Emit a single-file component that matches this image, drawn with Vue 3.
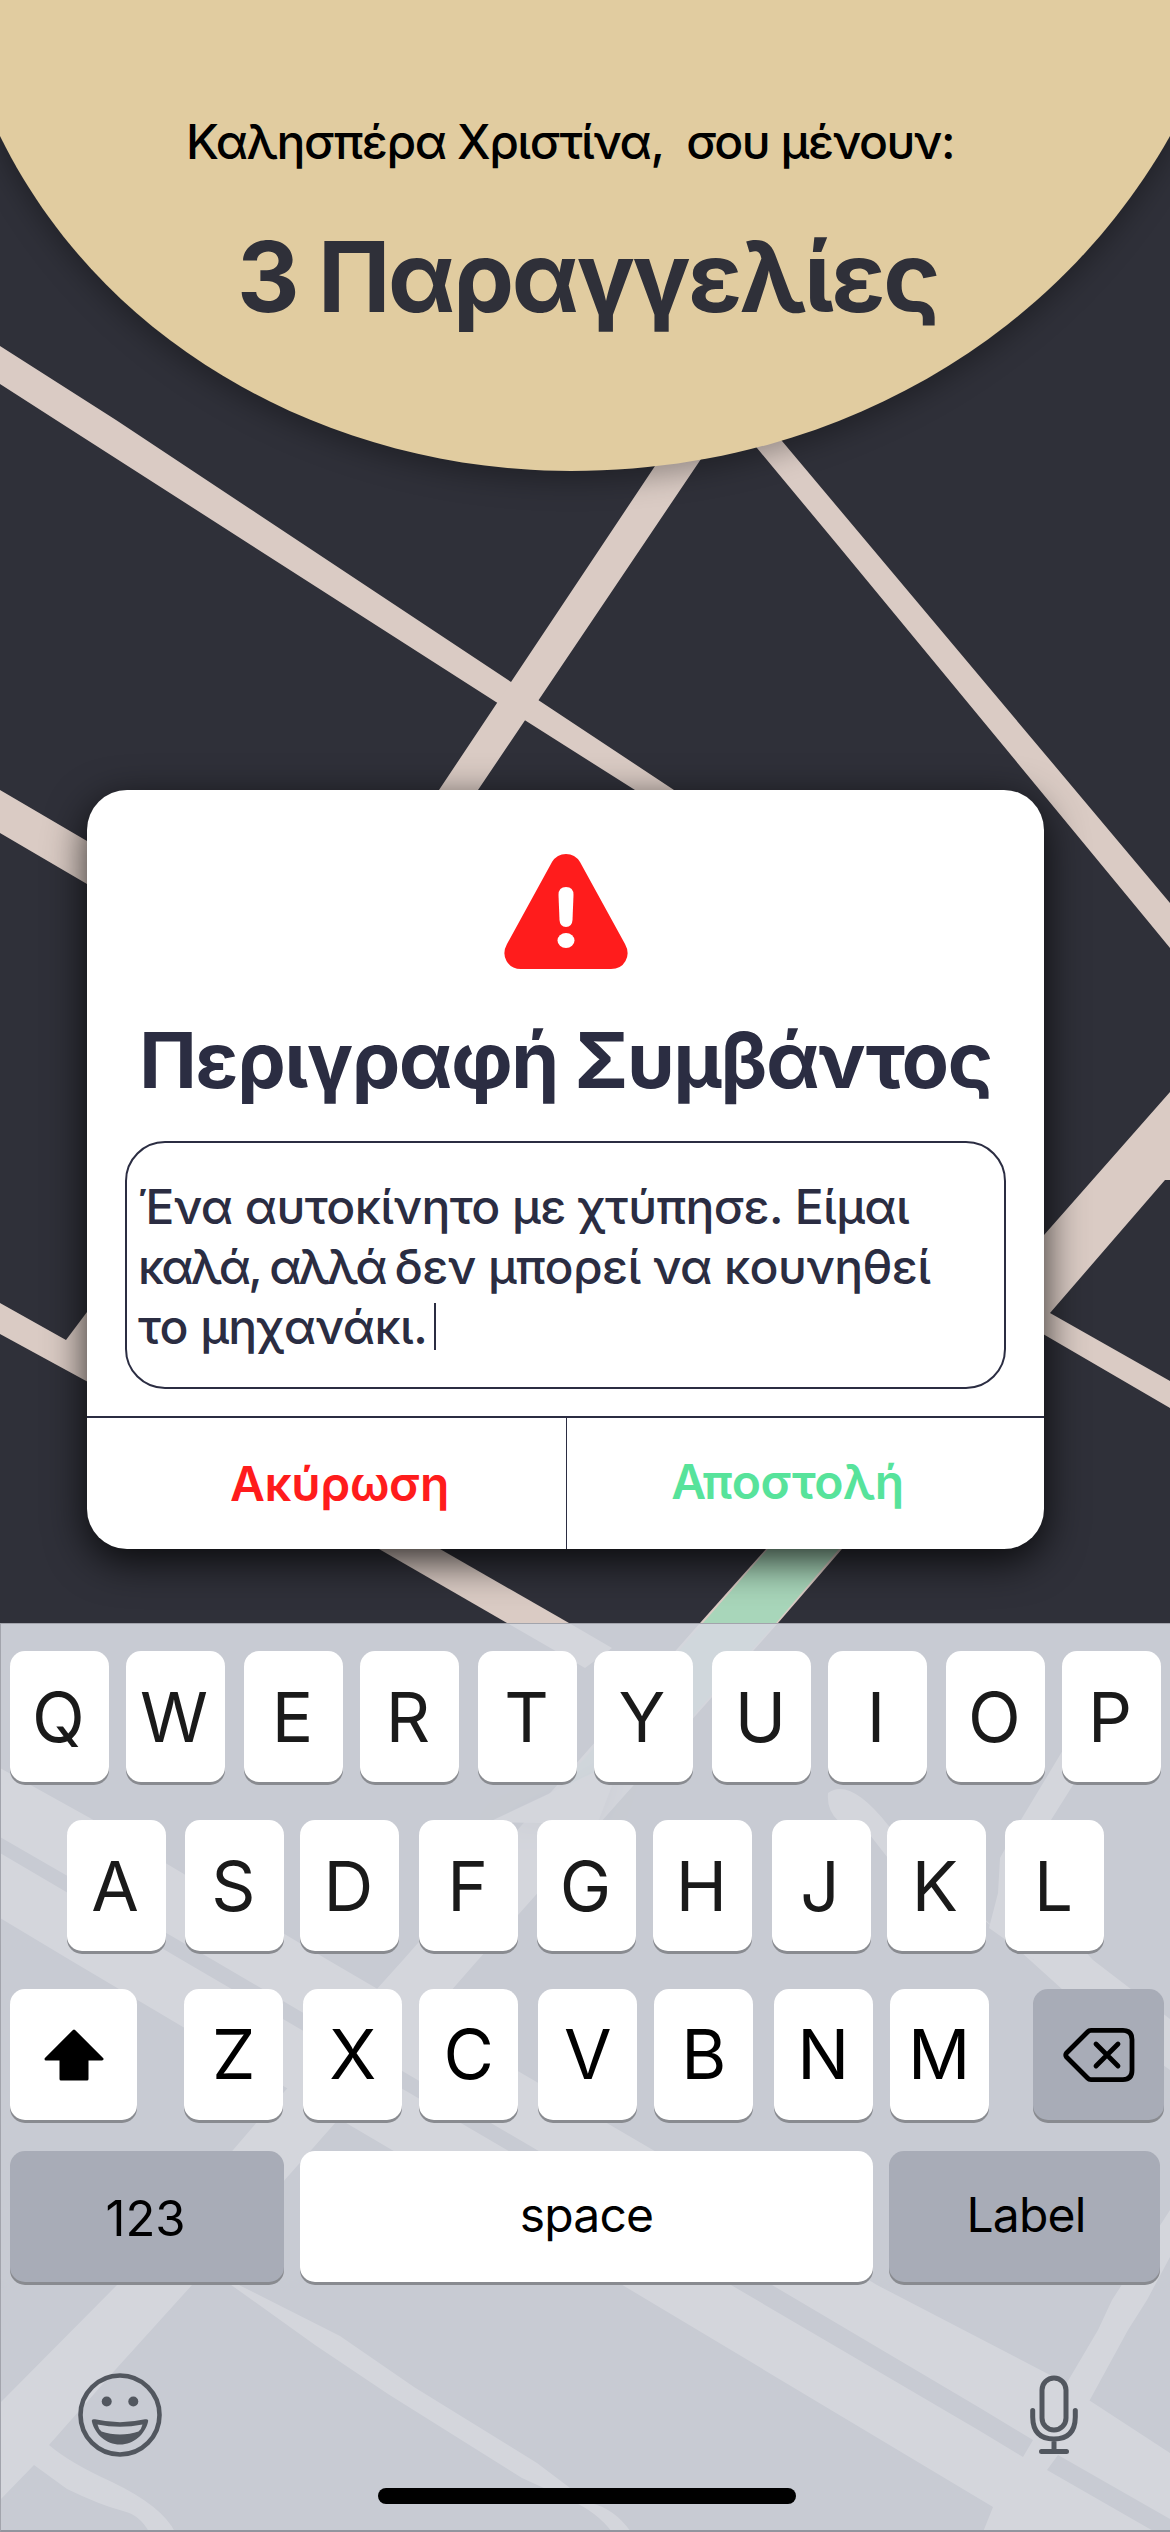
<script setup>
const withGaps = (letters, gaps) =>
  [...letters].map((letter, i) => ({ letter, gap: gaps[i] + 'px' }))

const topRow = withGaps('QWERTYUIOP', [0, 16.5, 19.5, 16.5, 19.5, 16.5, 19.5, 16.5, 19.5, 16.5])
const middleRow = withGaps('ASDFGHJKL', [0, 19.5, 16, 20, 19, 17, 19.5, 16, 19.5])
const bottomRow = withGaps('ZXCVBNM', [0, 20, 17, 20, 17, 20.5, 17])
</script>

<template>
  <main class="screen">
    <svg class="map" viewBox="0 0 1170 2532" aria-hidden="true">
      <defs>
        <filter id="puckShadow" x="-50%" y="-50%" width="200%" height="200%">
          <feDropShadow dx="0" dy="6" stdDeviation="12" flood-opacity="0.5" />
        </filter>
      </defs>
      <g fill="#dacbc4">
        <path d="M0 346L116 420L511 682L674 790L760 848V874L635 790L496 702L56 420L0 384Z" />
        <path d="M680 428L655 466L439 790L402 846H440L478 790L701 459L722 428Z" />
        <path d="M720 404L757 448L836 543L1147 920L1170 948V903L782 441L750 402Z" />
        <path d="M0 790L87 841L200 906V950L87 884L0 833Z" />
        <path d="M0 1303L66 1340L87 1312L100 1295H160L110 1394L0 1334Z" />
        <path d="M1000 1285L1044 1235L1170 1092V1180H1165L1050 1313L1170 1381V1408L1000 1309Z" />
        <path d="M330 1520L379 1549L507 1623L585 1668L612 1648L569 1623L440 1549L380 1515Z" />
        <path d="M794 1515L766 1549L700 1623L403 1960L257 2122L119 2283L0 2403V2500L34 2465L49 2445L116 2369L192 2285L336 2122L478 1960L778 1623L842 1549L872 1515Z" />
        <path d="M0 1768L90 1818L328 1960L653 2150L877 2285L1052 2376L1170 2453V2519L1058 2455L1047 2470L1155 2532H983L993 2507L619 2283L392 2150L183 2027L70 1960L0 1918Z" />
        <path d="M1112 2300L1170 2210V2257L1147 2300L1128 2330L1086 2407L1065 2386L1098 2330Z" />
        <path d="M206 2267L315 2345L388 2394L522 2478L570 2500Q597 2512 612 2532H631Q614 2508 590 2503L537 2463L414 2387L340 2336L235 2283L215 2268Z" />
        <path d="M30 2445H49Q70 2463 112 2482Q162 2506 175 2532H149Q140 2515 123 2511Q100 2505 67 2489L34 2465Z" />
        <path d="M828 1793Q850 1777 888 1825L940 1885L1034 1960L1093 1960L1170 2019V2070L1128 2040L1063 1990L980 1915L905 1880L870 1835Q825 1825 828 1793Z" />
        <path d="M1073 1785L1100 1735L1072 1735L1022 1818L1000 1858L998 1893L989 1928L1034 1960L1093 1960L1020 1880L1051 1820Z" />
      </g>
      <path fill="#2f3039" d="M0 1837L213 1960L537 2150L772 2285L980 2408L1033 2440L1023 2457L980 2431L731 2285L507 2150L182 1960L0 1853Z" />
      <path fill="#a8d6ba" d="M801 1510L768 1549L703 1623L562 1784H632L776 1623L839 1549L870 1515Z" />
      <path fill="#dacbc4" filter="url(#puckShadow)" d="M620 1752L593 1773L489 1822L597 1824L612 1785Z" />
    </svg>

    <header class="header">
      <svg class="dome" viewBox="0 0 1170 540" aria-hidden="true">
        <path fill="#e1cca0" d="M0 0V136C105 350 335 471 571 471C830 471 1055 340 1170 136V0Z" />
      </svg>
      <p class="greeting">Καλησπέρα Χριστίνα,&nbsp; σου μένουν:</p>
      <h1 class="orders">3 Παραγγελίες</h1>
    </header>

    <section class="card">
      <svg class="warning" viewBox="0 0 124 115" aria-hidden="true">
        <path fill="#ff1c1c" d="M48 8Q53 0 62 0Q71 0 76 8L121 90Q126 99 121.500 107Q117 115 107 115H17Q7 115 2.500 107Q-2 99 3 90Z" />
        <path fill="#fff" d="M54.500 41Q54.500 33 62 33Q69.500 33 69.500 41L68.500 66Q68 73 62 73Q56 73 55.500 66Z" />
        <ellipse cx="62" cy="86.500" rx="8.500" ry="7.500" fill="#fff" />
      </svg>
      <h2 class="title">Περιγραφή Συμβάντος</h2>
      <div class="field">
        <p>Ένα αυτοκίνητο με χτύπησε. Είμαι</p>
        <p><span class="tight">καλά, αλλά </span>δεν μπορεί να κουνηθεί</p>
        <p>το μηχανάκι.<i class="caret"></i></p>
      </div>
      <div class="actions">
        <button class="action cancel">Ακύρωση</button>
        <button class="action send">Αποστολή</button>
      </div>
    </section>

    <section class="keyboard">
      <div class="row row-top">
        <span v-for="k in topRow" :key="k.letter" class="key" :style="{ marginLeft: k.gap }">{{ k.letter }}</span>
      </div>
      <div class="row row-middle">
        <span v-for="k in middleRow" :key="k.letter" class="key" :style="{ marginLeft: k.gap }">{{ k.letter }}</span>
      </div>
      <div class="row row-bottom">
        <span class="key shift">
          <svg viewBox="0 0 60 52" width="60" height="52" aria-hidden="true">
            <path d="M30 2L58 30H43V50H17V30H2Z" stroke="#000" stroke-width="3" stroke-linejoin="round" />
          </svg>
        </span>
        <div class="letters">
          <span v-for="k in bottomRow" :key="k.letter" class="key" :style="{ marginLeft: k.gap }">{{ k.letter }}</span>
        </div>
        <span class="key dark delete">
          <svg viewBox="0 0 72 54" width="72" height="54" aria-hidden="true" fill="none" stroke="#000" stroke-width="4.800" stroke-linecap="round" stroke-linejoin="round">
            <path d="M28 2.400H60Q69 2.400 69 11.400V42.600Q69 51.600 60 51.600H28Q26 51.600 24.500 50L3.500 29Q2 27 3.500 25L24.500 4Q26 2.400 28 2.400Z" />
            <path d="M33 16L55 38M55 16L33 38" />
          </svg>
        </span>
      </div>
      <div class="row row-space">
        <span class="key dark label numbers">123</span>
        <span class="key label space">space</span>
        <span class="key dark label return">Label</span>
      </div>
      <div class="tools">
        <svg viewBox="0 0 84 84" width="84" height="84" aria-hidden="true">
          <circle cx="42" cy="42" r="39.500" fill="none" stroke="#52575f" stroke-width="4.600" />
          <circle cx="28.700" cy="28.500" r="5" fill="#52575f" />
          <circle cx="55.300" cy="28.500" r="5" fill="#52575f" />
          <path fill="#52575f" fill-rule="evenodd" d="M14 49Q13 45.500 17 46.300Q42 52 67 46.300Q71 45.500 70 49C67 61 56 71.500 42 71.500S17 61 14 49ZM19.500 51.500Q20.500 56 23.500 58.500Q32 61.500 42 61.500T60.500 58.500Q63.500 56 64.500 51.500Q42 56 19.500 51.500Z" />
        </svg>
        <svg viewBox="0 0 48 80" width="48" height="80" aria-hidden="true" fill="none" stroke="#52575f" stroke-width="5" stroke-linecap="round">
          <rect x="12" y="3" width="24" height="52" rx="12" />
          <path d="M2.700 35.500V42Q3 64 24 64T45.300 42V35.500M24 64V76M11.500 76.500H36.500" />
        </svg>
      </div>
      <div class="home"></div>
    </section>
  </main>
</template>

<style>
body {
  margin: 0;
}
</style>

<style scoped>
.screen {
  position: relative;
  display: flex;
  flex-direction: column;
  width: 1170px;
  height: 2532px;
  overflow: hidden;
  background: #2f3039;
  font-family: Inter, "Liberation Sans", sans-serif;
}
p,
h1,
h2 {
  margin: 0;
}
.map {
  position: absolute;
  inset: 0;
  width: 1170px;
  height: 2532px;
}
.header {
  position: relative;
  box-sizing: border-box;
  height: 790px;
  padding-top: 111px;
  flex: none;
}
.dome {
  position: absolute;
  top: 0;
  left: 0;
  width: 1170px;
  height: 540px;
  filter: drop-shadow(0 10px 14px rgba(0, 0, 0, 0.3));
}
.greeting {
  position: relative;
  padding-left: 186px;
  font-size: 48px;
  line-height: 62px;
  font-weight: 500;
  letter-spacing: -1.45px;
  white-space: nowrap;
  color: #000;
}
.orders {
  position: relative;
  margin-top: 44px;
  padding-left: 237px;
  font-size: 97px;
  line-height: 120px;
  font-weight: 700;
  letter-spacing: -2.35px;
  white-space: nowrap;
  color: #2f3039;
}
.card {
  position: relative;
  display: flex;
  flex-direction: column;
  align-items: center;
  flex: none;
  box-sizing: border-box;
  width: 957px;
  height: 759px;
  margin-left: 87px;
  padding-top: 64px;
  border-radius: 40px;
  background: #fff;
  box-shadow: 0 12px 40px rgba(0, 0, 0, 0.8);
}
.warning {
  width: 124px;
  height: 115px;
}
.title {
  margin-top: 41px;
  font-size: 77px;
  line-height: 100px;
  font-weight: 700;
  letter-spacing: -1.3px;
  white-space: nowrap;
  color: #2b2d42;
}
.field {
  box-sizing: border-box;
  width: 881px;
  height: 248px;
  margin-top: 31px;
  padding: 34px 0 0 11px;
  border: 2px solid #2b2d42;
  border-radius: 40px;
  font-size: 48px;
  line-height: 60px;
  font-weight: 500;
  letter-spacing: -0.6px;
  white-space: nowrap;
  color: #2b2d42;
}
.tight {
  letter-spacing: -2.95px;
}
.caret {
  display: inline-block;
  width: 2px;
  height: 47px;
  margin-left: 7px;
  vertical-align: -6px;
  background: #2b2d42;
}
.actions {
  display: flex;
  width: 100%;
  flex: 1;
  margin-top: 27px;
  border-top: 2px solid #2b2d42;
}
.action {
  box-sizing: border-box;
  padding: 0;
  border: 0;
  background: none;
  font: 600 48px/60px Inter, "Liberation Sans", sans-serif;
  letter-spacing: -0.4px;
}
.cancel {
  width: 480px;
  padding-left: 26px;
  border-right: 1px solid #2b2d42;
  color: #ff1c1c;
}
.send {
  width: 477px;
  padding-right: 36px;
  padding-bottom: 4px;
  color: #57e39b;
}
.keyboard {
  position: relative;
  flex: none;
  box-sizing: border-box;
  height: 909px;
  margin-top: 74px;
  padding-top: 27px;
  border-top: 1px solid #a2a4ac;
  border-left: 1px solid #a2a4ac;
  border-bottom: 2px solid #92959e;
  background: rgba(211, 214, 222, 0.935);
}
.row {
  display: flex;
  height: 131px;
  margin-bottom: 38px;
}
.row-top {
  padding-left: 9px;
}
.row-middle {
  padding-left: 65.5px;
}
.row-bottom {
  justify-content: space-between;
  margin-bottom: 31px;
  padding: 0 6px 0 9px;
}
.row-space {
  justify-content: space-between;
  margin-bottom: 0;
  padding: 0 10px 0 9px;
}
.letters {
  display: flex;
  padding-left: 3px;
}
.key {
  display: flex;
  align-items: center;
  justify-content: center;
  flex: none;
  box-sizing: border-box;
  width: 99px;
  height: 131px;
  border-radius: 15px;
  background: #fff;
  box-shadow: 0 3px 0 #898b90;
  color: #1a1a1a;
  font-size: 69px;
  line-height: 1;
}
.row-top .key,
.row-middle .key {
  padding: 1px 2px 0 0;
}
.row-bottom .key {
  color: #000;
}
.key.dark {
  background: #a8acb7;
}
.key.shift {
  width: 127px;
}
.key.delete {
  width: 131px;
}
.key.label {
  color: #000;
  font-size: 48px;
}
.key.numbers {
  width: 274px;
  padding: 4px 3px 0 0;
  font-size: 49px;
}
.key.space {
  width: 573px;
  padding-bottom: 3px;
  letter-spacing: -0.8px;
}
.key.return {
  width: 271px;
  padding: 0 0 3px 3px;
  letter-spacing: -0.8px;
}
.tools {
  display: flex;
  align-items: center;
  justify-content: space-between;
  height: 84px;
  margin-top: 91px;
  padding: 0 92px 0 77px;
}
.home {
  width: 418px;
  height: 16px;
  margin: 31px 0 0 377px;
  border-radius: 8px;
  background: #000;
}
</style>
